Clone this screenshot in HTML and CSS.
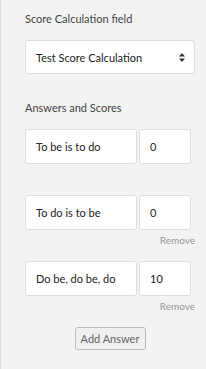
FILE: index.html
```html
<!DOCTYPE html>
<html lang="en">
<head>
    <meta charset="UTF-8">
    <title>Score Calculation</title>
    <link rel="stylesheet" href="styles.css">
</head>
<body>
    <div class="panel">
        <div class="field">
            <label class="field-label">Score Calculation field</label>
            <div class="select-box">
                <span>Test Score Calculation</span>
                <svg class="select-arrows" width="6" height="9" viewBox="0 0 6 9">
                    <path d="M3 0 L6 3.5 H0 Z M0 5.5 H6 L3 9 Z" fill="#333"/>
                </svg>
            </div>
        </div>

        <div class="field answers">
            <label class="field-label">Answers and Scores</label>

            <div class="answer">
                <div class="answer-row">
                    <div class="answer-text">To be is to do</div>
                    <div class="answer-score">0</div>
                </div>
                <div class="remove"></div>
            </div>

            <div class="answer">
                <div class="answer-row">
                    <div class="answer-text">To do is to be</div>
                    <div class="answer-score">0</div>
                </div>
                <div class="remove">Remove</div>
            </div>

            <div class="answer">
                <div class="answer-row">
                    <div class="answer-text">Do be, do be, do</div>
                    <div class="answer-score">10</div>
                </div>
                <div class="remove">Remove</div>
            </div>

            <div class="add-wrap">
                <button class="add-btn">Add Answer</button>
            </div>
        </div>
    </div>
</body>
</html>
```

FILE: styles.css
```css
* {
    box-sizing: border-box;
}

body {
    margin: 0;
    padding: 0;
    background: #f3f3f3;
    font-family: Lato, 'Open Sans', sans-serif;
    font-size: 11px;
    color: #333;
}

.panel {
    min-height: 369px;
    border-left: 1px solid #dcdcdc;
    padding: 12px 11px 0 24px;
}

.field-label {
    display: block;
    color: #444;
    font-size: 11px;
    line-height: 14px;
    margin-bottom: 14px;
}

.select-box {
    width: 170px;
    height: 34px;
    background: #fff;
    border: 1px solid #dedede;
    border-radius: 3px;
    display: flex;
    align-items: center;
    justify-content: space-between;
    padding: 0 9px 0 10px;
    color: #222;
}

.answers {
    margin-top: 27px;
}

.answer-row {
    display: flex;
    gap: 2px;
}

.answer-text,
.answer-score {
    height: 35px;
    background: #fff;
    border: 1px solid #dedede;
    border-radius: 3px;
    display: flex;
    align-items: center;
    padding: 0 10px;
    color: #222;
}

.answer-text {
    width: 112px;
}

.answer-score {
    width: 52px;
}

.remove {
    height: 31px;
    padding-top: 4px;
    text-align: right;
    color: #999;
    font-size: 10px;
    line-height: 12px;
}

.add-wrap {
    display: flex;
    justify-content: center;
    width: 170px;
}

.add-btn {
    font-family: inherit;
    font-size: 11px;
    color: #666;
    background: #efefef;
    border: 1px solid #bbb;
    border-radius: 3px;
    width: 71px;
    height: 23px;
    padding: 0;
    margin-top: 0;
}
```
